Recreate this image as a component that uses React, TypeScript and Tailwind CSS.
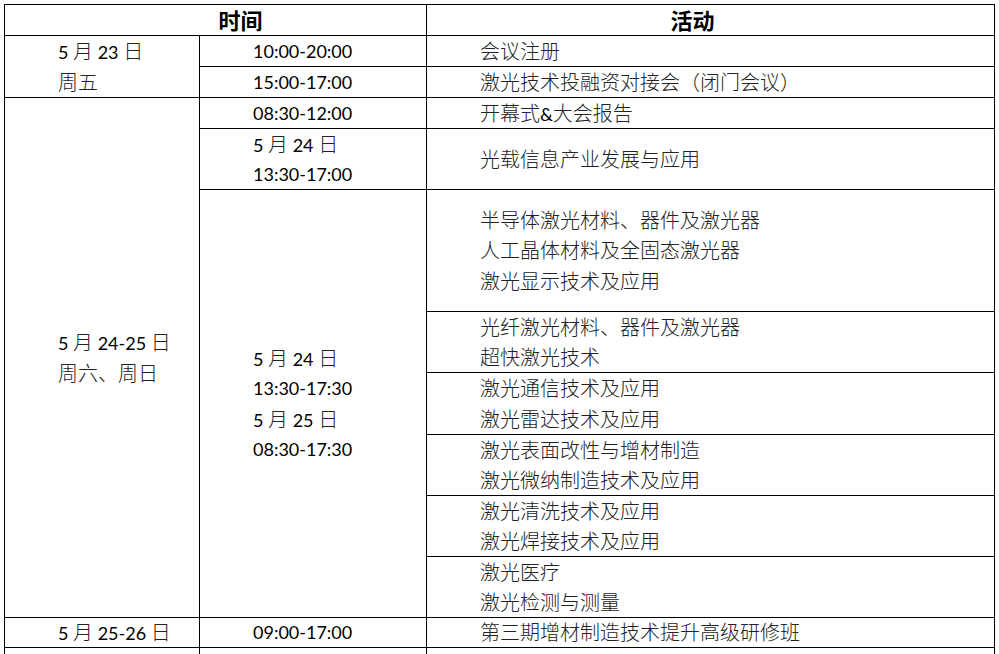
import React from "react";

// Latin runs are set a little smaller (Calibri-like widths), CJK at full 20px
function Mixed({ text }: { text: string }) {
  const parts = text.split(/([\x20-\x7e]+)/).filter((p) => p.length > 0);
  return (
    <>
      {parts.map((p, i) =>
        /^[\x20-\x7e]+$/.test(p) ? (
          <span key={i} className="font-['Lato','Liberation_Sans',sans-serif] text-[18px] text-black whitespace-pre">
            {p}
          </span>
        ) : (
          <span key={i} className="font-['Noto_Sans_CJK_SC',sans-serif] text-[20px] font-light text-[#222]">
            {p}
          </span>
        )
      )}
    </>
  );
}

function Cell({ lines, className = "" }: { lines: string[]; className?: string }) {
  return (
    <div className={`flex flex-col justify-center border-r border-b border-black pl-[53px] leading-[30.5px] ${className}`}>
      {lines.map((l, i) => (
        <div key={i} className="flex h-[30.5px] items-baseline whitespace-nowrap">
          <Mixed text={l} />
        </div>
      ))}
    </div>
  );
}

export default function App() {
  return (
    <div className="min-h-screen bg-white pl-[4px] pt-[4px]">
      <div
        className="grid w-[991px] border-t border-l border-black"
        style={{
          gridTemplateColumns: "195px 227px 568px",
          gridTemplateRows: "31px 31px 31px 31px 61px 122px 61px 62px 61px 61px 61px 30px 31px",
        }}
      >
        {/* header */}
        <div className="col-span-2 flex items-center justify-center border-r border-b border-black pb-[3px] pl-[50px] font-['Noto_Sans_CJK_SC',sans-serif] text-[22px] font-bold leading-none">
          时间
        </div>
        <div className="flex items-center justify-center border-r border-b border-black pb-[3px] pr-[36px] font-['Noto_Sans_CJK_SC',sans-serif] text-[22px] font-bold leading-none">
          活动
        </div>

        {/* 5/23 */}
        <Cell className="row-span-2" lines={["5 月 23 日", "周五"]} />
        <Cell lines={["10:00-20:00"]} />
        <Cell lines={["会议注册"]} />
        <Cell lines={["15:00-17:00"]} />
        <Cell lines={["激光技术投融资对接会（闭门会议）"]} />

        {/* 5/24-25 */}
        <Cell className="row-span-8" lines={["5 月 24-25 日", "周六、周日"]} />
        <Cell lines={["08:30-12:00"]} />
        <Cell lines={["开幕式&大会报告"]} />
        <Cell lines={["5 月 24 日", "13:30-17:00"]} />
        <Cell lines={["光载信息产业发展与应用"]} />
        <Cell className="row-span-6" lines={["5 月 24 日", "13:30-17:30", "5 月 25 日", "08:30-17:30"]} />
        <Cell lines={["半导体激光材料、器件及激光器", "人工晶体材料及全固态激光器", "激光显示技术及应用"]} />
        <Cell lines={["光纤激光材料、器件及激光器", "超快激光技术"]} />
        <Cell lines={["激光通信技术及应用", "激光雷达技术及应用"]} />
        <Cell lines={["激光表面改性与增材制造", "激光微纳制造技术及应用"]} />
        <Cell lines={["激光清洗技术及应用", "激光焊接技术及应用"]} />
        <Cell lines={["激光医疗", "激光检测与测量"]} />

        {/* 5/25-26 */}
        <Cell lines={["5 月 25-26 日"]} />
        <Cell lines={["09:00-17:00"]} />
        <Cell lines={["第三期增材制造技术提升高级研修班"]} />

        <Cell lines={[""]} />
        <Cell lines={[""]} />
        <Cell lines={[""]} />
      </div>
    </div>
  );
}
